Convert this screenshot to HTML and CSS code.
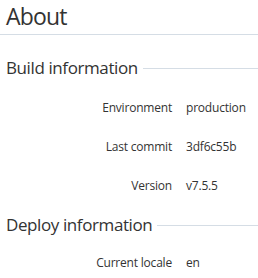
FILE: index.html
```html
<!DOCTYPE html>
<html lang="en">
<head>
    <meta charset="UTF-8">
    <title>About</title>
    <link rel="stylesheet" href="styles.css">
</head>
<body>
    <header class="page-header">
        <h1>About</h1>
    </header>

    <section class="info-section build">
        <h2 class="section-title">Build information</h2>
        <dl class="info-list">
            <div class="info-row"><dt>Environment</dt><dd>production</dd></div>
            <div class="info-row"><dt>Last commit</dt><dd>3df6c55b</dd></div>
            <div class="info-row"><dt>Version</dt><dd>v7.5.5</dd></div>
        </dl>
    </section>

    <section class="info-section deploy">
        <h2 class="section-title">Deploy information</h2>
        <dl class="info-list">
            <div class="info-row"><dt>Current locale</dt><dd>en</dd></div>
        </dl>
    </section>
</body>
</html>
```

FILE: styles.css
```css
body {
    font-family: "Open Sans", sans-serif;
    color: #333;
    background: #fff;
    margin: 0;
    padding: 0;
}
.page-header {
    padding: 0 6px 2px;
    border-bottom: 1px solid #d5dde5;
}
.page-header h1 {
    margin: 0;
    font-size: 23px;
    font-weight: 400;
    letter-spacing: -0.8px;
    line-height: 32px;
}
.section-title {
    display: flex;
    align-items: center;
    gap: 5px;
    margin: 0;
    padding: 0 0 0 6px;
    font-size: 17px;
    font-weight: 400;
    letter-spacing: -0.4px;
    line-height: 24px;
}
.section-title::after {
    content: "";
    flex: 1;
    border-top: 1px solid #d5dde5;
}
.build .section-title {
    margin-top: 21px;
}
.deploy .section-title {
    margin-top: 8px;
}
.info-list {
    margin: 8px 0 0;
}
.deploy .info-list {
    margin-top: 6px;
}
.info-row {
    display: flex;
    font-size: 12px;
    letter-spacing: -0.2px;
    line-height: 17px;
    padding: 11px 0;
}
.info-row dt {
    width: 172px;
    text-align: right;
}
.info-row dd {
    margin: 0 0 0 14px;
}
```
